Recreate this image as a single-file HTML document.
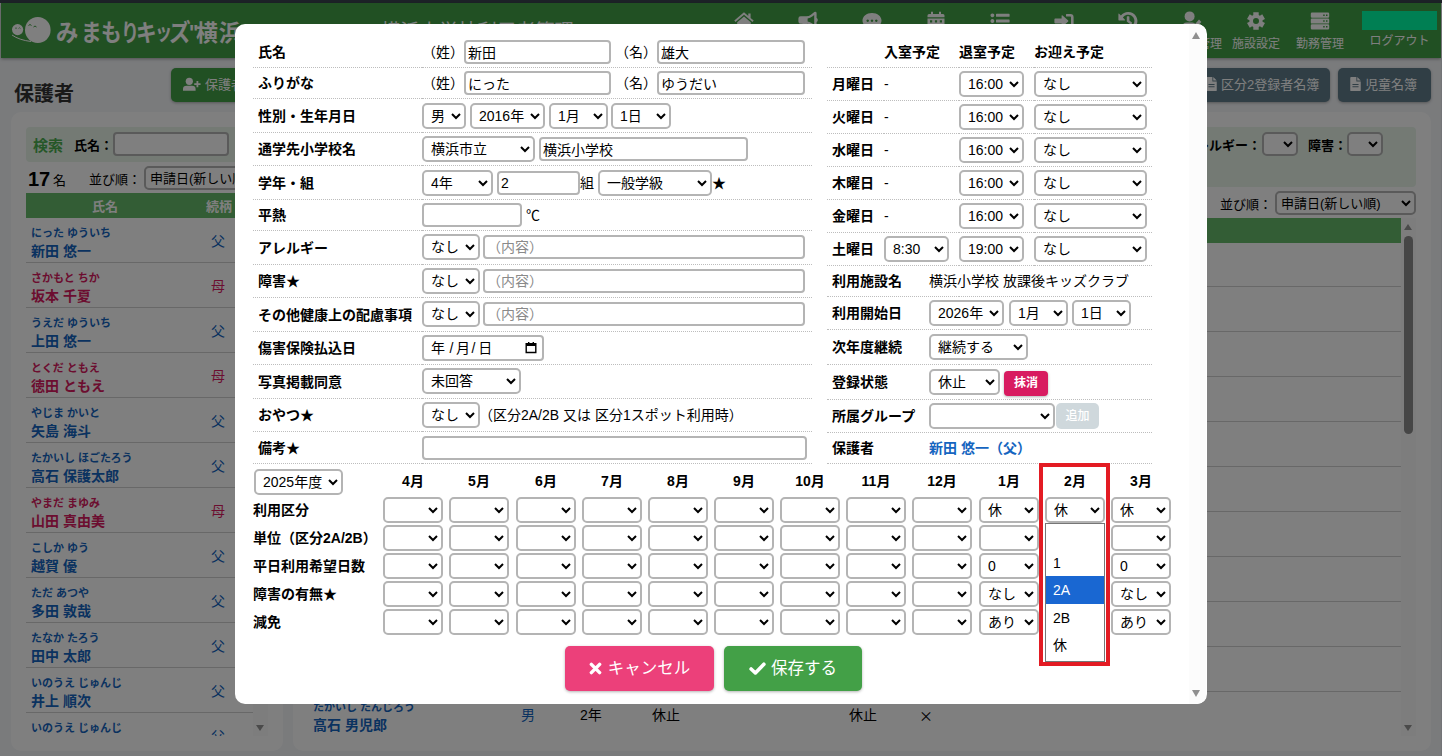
<!DOCTYPE html><html lang="ja"><head><meta charset="utf-8"><title>保護者</title><style>
*{box-sizing:border-box}
html,body{margin:0;padding:0}
body{width:1442px;height:756px;overflow:hidden;position:relative;background:#f4f6f9;font-family:"Liberation Sans", "Noto Sans CJK JP", sans-serif;font-size:14px;color:#000;line-height:20px}
input,select,button{font-family:"Liberation Sans", "Noto Sans CJK JP", sans-serif;font-size:14px;color:#000}
.abs{position:absolute}
#topbar{left:0;top:0;width:1442px;height:3px;background:#3a444f}
#hdr{left:1px;top:3px;width:1440px;height:55px;background:#43a047;box-shadow:0 1px 3px rgba(0,0,0,.35)}
#logo{left:10px;top:10px;width:44px;height:36px}
#brand{left:55px;top:12px;height:36px;width:200px;line-height:36px;font-size:24px;font-weight:700;color:#fff;white-space:nowrap}
#brand span{position:absolute;top:0;transform-origin:0 50%;display:block}
#title{left:380px;top:14px;font-size:19.3px;line-height:30px;color:#fff;white-space:nowrap}
.nav{top:0;width:64px;height:55px;text-align:center;color:#fff}
.nav svg{position:absolute;left:22px;top:8px;width:20px;height:20px;fill:#fff}
.nav span{position:absolute;left:-8px;width:80px;top:33px;font-size:12px;line-height:16px;white-space:nowrap}
#userbox{left:1361px;top:8px;width:75px;height:19px;background:#00ffa6}
#logout{left:1361px;top:30px;width:75px;text-align:center;font-size:12px;line-height:16px;color:#fff}
h1{position:absolute;left:14px;top:79px;margin:0;font-size:20px;line-height:30px;font-weight:700;color:#333}
.btn{position:absolute;height:34px;border-radius:5px;color:#fff;font-size:13px;line-height:34px;white-space:nowrap;box-shadow:0 1px 3px rgba(0,0,0,.3);padding:0 12px}
.btn svg{width:14px;height:14px;fill:#fff;vertical-align:-2px;margin-right:4px}
.card{position:absolute;background:#fff;border-radius:10px;overflow:hidden}
.sbox{position:absolute;background:#e8f5e9;border-radius:4px}
.s{border:2px solid #b4b4b4;border-radius:5px;background:#fff;height:26px;padding:0 0 0 3px;margin:0;font-size:14px;vertical-align:middle}
.up td+td>*{position:relative;top:-0.5px}
.s.ps{font-size:13px;height:24px;padding-left:0}
.i{border:2px solid #b4b4b4;border-radius:4px;background:#fff;height:24px;padding:0 2px;margin:0;font-size:14px;vertical-align:middle}
.i::placeholder{color:#8a8a8a}
.th{position:absolute;background:#66bb6a;color:#fff;font-weight:700;font-size:13px;line-height:27px;height:25px}
.row{position:absolute;height:45px;border-bottom:1px solid #d0d0d0}
.row .k{position:absolute;left:5px;top:7px;font-size:11px;line-height:16px;font-weight:700;white-space:nowrap}
.row .n{position:absolute;left:5px;top:23px;font-size:14px;line-height:20px;font-weight:700;white-space:nowrap}
.row .r{position:absolute;top:13px;font-size:14px;line-height:20px;white-space:nowrap}
.m{color:#1565c0}.f{color:#d81b60}
#ov{left:0;top:0;width:1442px;height:756px;background:rgba(0,0,0,.5)}
#modal{left:235px;top:24px;width:972px;height:680px;background:#fff;border-radius:10px;overflow:hidden}
table{border-collapse:separate;border-spacing:0}
.ft{position:absolute}
.ft td{padding:0;border-bottom:1px dotted #bdbdbd;vertical-align:middle;white-space:nowrap;font-size:14px}
.ft td.l{font-weight:700;padding-left:5px}
.ft td b{font-weight:700}
.ft td span{vertical-align:middle}
.g{position:absolute;font-weight:700;font-size:14px;line-height:20px;white-space:nowrap}
.gs{position:absolute;width:60px;height:26px}
.sb{position:absolute;background:#fcfcfc}
.tri{position:absolute;width:0;height:0;border-left:5px solid transparent;border-right:5px solid transparent}
</style></head><body>
<div id="topbar" class="abs"></div>
<header id="hdr" class="abs">
<svg id="logo" class="abs" viewBox="0 0 44 36"><ellipse cx="26.8" cy="17" rx="12.8" ry="13" fill="#fff"/><circle cx="6.6" cy="16.6" r="5.6" fill="#fff"/><path d="M1 22 Q8 27 20 28.5" stroke="#fff" stroke-width="1" fill="none"/><path d="M17.5 12.5 q1.5 -2 3 0 M22.5 14 q1.5 -2 3 0" stroke="#43a047" stroke-width="1" fill="none"/><path d="M4 15.5 q1 -1.5 2 0 M7.5 15.5 q1 -1.5 2 0" stroke="#43a047" stroke-width=".7" fill="none"/></svg>
<div id="brand" class="abs"><span style="left:0px;font-size:24px;transform:scaleX(0.93)">み</span><span style="left:24.5px;font-size:24px;transform:scaleX(0.86)">ま</span><span style="left:44.5px;font-size:24px;transform:scaleX(0.86)">も</span><span style="left:65px;font-size:24px;transform:scaleX(0.75)">り</span><span style="left:80px;font-size:24px;transform:scaleX(0.86)">キ</span><span style="left:99px;font-size:22px;transform:scaleX(0.78)">ッ</span><span style="left:113px;font-size:24px;transform:scaleX(0.9)">ズ</span><span style="left:132.5px;font-size:22px;transform:scaleX(0.9)">"</span><span style="left:140px;font-size:23px;transform:scaleX(0.95)">横</span><span style="left:163px;font-size:23px;transform:scaleX(0.95)">浜</span></div>
<div id="title" class="abs">横浜小学校利用者管理</div>
<div class="nav abs" style="left:711px"><svg viewBox="0 0 20 20" ><path d="M10 1.2 L0.3 9.6 L1.5 11 L10 3.7 L18.5 11 L19.7 9.6 L16.6 6.9 V2.6 H14.3 V4.9 Z M10 5.4 L3.2 11.3 V17.6 Q3.2 18.3 3.9 18.3 H8 V13.4 H12 V18.3 H16.1 Q16.8 18.3 16.8 17.6 V11.3 Z"/></svg><span>ホーム</span></div>
<div class="nav abs" style="left:775px"><svg viewBox="0 0 20 20" ><path fill-rule="evenodd" d="M17.2 0.8 Q18.6 0.8 18.6 2.2 V7 Q19.8 7.6 19.8 9 Q19.8 10.4 18.6 11 V15.8 Q18.6 17.2 17.2 17.2 Q16.7 17.2 16.3 16.9 L12.9 14.2 Q11.2 12.9 9 12.7 L9.9 17.6 Q10.1 18.8 8.9 18.8 H6.6 Q5.8 18.8 5.6 18 L4.4 12.7 H2.6 Q0.4 12.7 0.4 10.5 V7.5 Q0.4 5.3 2.6 5.3 H8.2 Q11 5.3 12.9 3.8 L16.3 1.1 Q16.7 0.8 17.2 0.8 Z M16.2 4 L14.3 5.5 Q12.2 7.2 9.6 7.6 V10.4 Q12.2 10.8 14.3 12.5 L16.2 14 Z"/></svg><span>お知らせ</span></div>
<div class="nav abs" style="left:839px"><svg viewBox="0 0 20 20" ><path fill-rule="evenodd" d="M10 2 C4.5 2 0.5 5.4 0.5 9.6 C0.5 11.5 1.3 13.2 2.7 14.5 C2.3 16 1.2 17.3 0.6 18 C3 18 4.9 17 5.9 16.3 C7.1 16.8 8.5 17 10 17 C15.5 17 19.5 13.7 19.5 9.6 C19.5 5.4 15.5 2 10 2 Z M5.7 8.4 a1.25 1.25 0 1 0 0.01 0 Z M10 8.4 a1.25 1.25 0 1 0 0.01 0 Z M14.3 8.4 a1.25 1.25 0 1 0 0.01 0 Z"/></svg><span>連絡</span></div>
<div class="nav abs" style="left:903px"><svg viewBox="0 0 20 20" ><path fill-rule="evenodd" d="M1.5 7.4 H18.5 V17 Q18.5 18.5 17 18.5 H3 Q1.5 18.5 1.5 17 Z M5 0.8 H7 V3 H13 V0.8 H15 V3 H17 Q18.5 3 18.5 4.5 V6.2 H1.5 V4.5 Q1.5 3 3 3 H5 Z M4 9.3 h2.2 v2.2 h-2.2 Z M8.9 9.3 h2.2 v2.2 h-2.2 Z M13.8 9.3 h2.2 v2.2 h-2.2 Z M4 13.6 h2.2 v2.2 h-2.2 Z M8.9 13.6 h2.2 v2.2 h-2.2 Z M13.8 13.6 h2.2 v2.2 h-2.2 Z"/></svg><span>予定</span></div>
<div class="nav abs" style="left:967px"><svg viewBox="0 0 20 20" ><path d="M2.4 2.4 a1.9 1.9 0 1 0 0.01 0 Z M6.6 2.8 H19 Q19.6 2.8 19.6 3.4 V5.2 Q19.6 5.8 19 5.8 H6.6 Q6 5.8 6 5.2 V3.4 Q6 2.8 6.6 2.8 Z M2.4 8.1 a1.9 1.9 0 1 0 0.01 0 Z M6.6 8.5 H19 Q19.6 8.5 19.6 9.1 V10.9 Q19.6 11.5 19 11.5 H6.6 Q6 11.5 6 10.9 V9.1 Q6 8.5 6.6 8.5 Z M2.4 13.8 a1.9 1.9 0 1 0 0.01 0 Z M6.6 14.2 H19 Q19.6 14.2 19.6 14.8 V16.6 Q19.6 17.2 19 17.2 H6.6 Q6 17.2 6 16.6 V14.8 Q6 14.2 6.6 14.2 Z"/></svg><span>名簿</span></div>
<div class="nav abs" style="left:1031px"><svg viewBox="0 0 20 20" ><path d="M12.6 3 H16.4 Q19.6 3 19.6 6.2 V13.8 Q19.6 17 16.4 17 H12.6 Q12 17 12 16.4 V15 Q12 14.4 12.6 14.4 H16.4 Q17 14.4 17 13.8 V6.2 Q17 5.6 16.4 5.6 H12.6 Q12 5.6 12 5 V3.6 Q12 3 12.6 3 Z M8.6 4.6 L14.2 9.6 Q14.6 10 14.2 10.4 L8.6 15.4 Q7.6 16.2 7.6 14.9 V12.4 H1.2 Q0.4 12.4 0.4 11.6 V8.4 Q0.4 7.6 1.2 7.6 H7.6 V5.1 Q7.6 3.8 8.6 4.6 Z"/></svg><span>入退室</span></div>
<div class="nav abs" style="left:1095px"><svg viewBox="0 0 20 20" ><path d="M10.4 1 A9 9 0 1 1 4.3 16.6 L6.2 14.6 A6.2 6.2 0 1 0 4.9 6.6 L7 8.7 Q7.5 9.4 6.6 9.4 H1 Q0.4 9.4 0.4 8.8 V3.2 Q0.4 2.3 1.1 2.8 L2.9 4.6 A9 9 0 0 1 10.4 1 Z M9.4 5.2 H10.8 Q11.4 5.2 11.4 5.8 V9.5 L13.9 11.4 Q14.4 11.8 14 12.3 L13.3 13.2 Q12.9 13.7 12.4 13.3 L9 10.7 Q8.8 10.5 8.8 10.2 V5.8 Q8.8 5.2 9.4 5.2 Z"/></svg><span>履歴</span></div>
<div class="nav abs" style="left:1159px"><svg viewBox="0 0 20 20" ><circle cx="7.6" cy="5.4" r="5"/><path d="M0.2 18.6 V16.8 Q0.2 11.6 5 11.6 H10.2 Q12.6 11.6 13.6 13.2 L12 15 V18.6 Z"/><path d="M17 8.6 L19.4 11 L14.6 15.8 L12.2 16.2 L12.6 13.4 Z"/></svg><span>利用者管理</span></div>
<div class="nav abs" style="left:1223px"><svg viewBox="0 0 20 20" ><path fill-rule="evenodd" stroke-linejoin="round" d="M7.31 3.97 L7.28 1.21 L12.72 1.21 L12.69 3.97 L13.87 4.66 L16.25 3.25 L18.97 7.96 L16.56 9.32 L16.56 10.68 L18.97 12.04 L16.25 16.75 L13.87 15.34 L12.69 16.03 L12.72 18.79 L7.28 18.79 L7.31 16.03 L6.13 15.34 L3.75 16.75 L1.03 12.04 L3.44 10.68 L3.44 9.32 L1.03 7.96 L3.75 3.25 L6.13 4.66 Z M10.00 7.00 A3.00 3.00 0 1 0 10.00 13.00 A3.00 3.00 0 1 0 10.00 7.00 Z"/></svg><span>施設設定</span></div>
<div class="nav abs" style="left:1287px"><svg viewBox="0 0 20 20" ><path fill-rule="evenodd" d="M2 1.5 H18 Q19.2 1.5 19.2 2.7 V5.6 Q19.2 6.8 18 6.8 H2 Q0.8 6.8 0.8 5.6 V2.7 Q0.8 1.5 2 1.5 Z M2 7.4 H18 Q19.2 7.4 19.2 8.6 V11.4 Q19.2 12.6 18 12.6 H2 Q0.8 12.6 0.8 11.4 V8.6 Q0.8 7.4 2 7.4 Z M2 13.2 H18 Q19.2 13.2 19.2 14.4 V17.3 Q19.2 18.5 18 18.5 H2 Q0.8 18.5 0.8 17.3 V14.4 Q0.8 13.2 2 13.2 Z M13.2 3.4 h1.5 v1.5 h-1.5 Z M16 3.4 h1.5 v1.5 h-1.5 Z M13.2 9.25 h1.5 v1.5 h-1.5 Z M16 9.25 h1.5 v1.5 h-1.5 Z M13.2 15.1 h1.5 v1.5 h-1.5 Z M16 15.1 h1.5 v1.5 h-1.5 Z"/></svg><span>勤務管理</span></div>
<div id="userbox" class="abs"></div><div id="logout" class="abs">ログアウト</div>
</header>
<h1>保護者</h1>
<div class="btn" style="left:171px;top:68px;width:130px;background:#43a047"><svg viewBox="0 0 20 16" style="width:18px;height:15px;vertical-align:-3px"><circle cx="7" cy="4.5" r="4"/><path d="M0 15 V13 Q0 9.5 4 9.5 H10 Q14 9.5 14 13 V15 Z M15 4 H17 V6.5 H19.5 V8.5 H17 V11 H15 V8.5 H12.5 V6.5 H15 Z"/></svg>保護者登録</div>
<div class="btn" style="left:1195px;top:68px;width:135px;background:#607d8b;padding-left:11px"><svg viewBox="0 0 12 16" style="width:11px"><path fill-rule="evenodd" d="M0 1 Q0 0 1 0 H7 V5 H12 V15 Q12 16 11 16 H1 Q0 16 0 15 Z M8 0 L12 4 H8 Z M2.5 8 H9.5 V9.2 H2.5 Z M2.5 10.5 H9.5 V11.7 H2.5 Z"/></svg>区分2登録者名簿</div>
<div class="btn" style="left:1338px;top:68px;width:93px;background:#607d8b"><svg viewBox="0 0 12 16" style="width:11px"><path fill-rule="evenodd" d="M0 1 Q0 0 1 0 H7 V5 H12 V15 Q12 16 11 16 H1 Q0 16 0 15 Z M8 0 L12 4 H8 Z M2.5 8 H9.5 V9.2 H2.5 Z M2.5 10.5 H9.5 V11.7 H2.5 Z"/></svg>児童名簿</div>
<section class="card" style="left:11px;top:112px;width:272px;height:639px">
<div class="sbox" style="left:15px;top:15px;width:242px;height:35px"></div>
<div class="abs" style="left:22px;top:24px;font-size:15px;font-weight:700;color:#4caf50;white-space:nowrap">検索</div>
<div class="abs" style="left:63px;top:24px;font-size:13px;font-weight:700;white-space:nowrap">氏名：</div>
<input class="i abs" style="left:102px;top:20px;width:116px" aria-label="氏名">
<div class="abs" style="left:17px;top:55px;font-size:20px;line-height:24px;font-weight:700">17</div>
<div class="abs" style="left:42px;top:57px;font-size:13px;line-height:24px;white-space:nowrap">名</div>
<div class="abs" style="left:78px;top:56px;font-size:13px;line-height:24px;white-space:nowrap">並び順：</div>
<select class="s ps abs" style="left:133px;top:54px;width:150px"><option>申請日(新しい順)</option></select>
<div class="th" style="left:15px;top:81px;width:227px"><span class="abs" style="left:66px">氏名</span><span class="abs" style="left:180px">続柄</span></div>
<div class="abs" style="left:15px;top:106px;width:227px;height:518px;overflow:hidden">
<div class="row m" style="left:0;top:0px;width:227px"><span class="k">にった ゆういち</span><span class="n">新田 悠一</span><span class="r" style="left:185px">父</span></div>
<div class="row f" style="left:0;top:45px;width:227px"><span class="k">さかもと ちか</span><span class="n">坂本 千夏</span><span class="r" style="left:185px">母</span></div>
<div class="row m" style="left:0;top:90px;width:227px"><span class="k">うえだ ゆういち</span><span class="n">上田 悠一</span><span class="r" style="left:185px">父</span></div>
<div class="row f" style="left:0;top:135px;width:227px"><span class="k">とくだ ともえ</span><span class="n">徳田 ともえ</span><span class="r" style="left:185px">母</span></div>
<div class="row m" style="left:0;top:180px;width:227px"><span class="k">やじま かいと</span><span class="n">矢島 海斗</span><span class="r" style="left:185px">父</span></div>
<div class="row m" style="left:0;top:225px;width:227px"><span class="k">たかいし ほごたろう</span><span class="n">高石 保護太郎</span><span class="r" style="left:185px">父</span></div>
<div class="row f" style="left:0;top:270px;width:227px"><span class="k">やまだ まゆみ</span><span class="n">山田 真由美</span><span class="r" style="left:185px">母</span></div>
<div class="row m" style="left:0;top:315px;width:227px"><span class="k">こしか ゆう</span><span class="n">越賀 優</span><span class="r" style="left:185px">父</span></div>
<div class="row m" style="left:0;top:360px;width:227px"><span class="k">ただ あつや</span><span class="n">多田 敦哉</span><span class="r" style="left:185px">父</span></div>
<div class="row m" style="left:0;top:405px;width:227px"><span class="k">たなか たろう</span><span class="n">田中 太郎</span><span class="r" style="left:185px">父</span></div>
<div class="row m" style="left:0;top:450px;width:227px"><span class="k">いのうえ じゅんじ</span><span class="n">井上 順次</span><span class="r" style="left:185px">父</span></div>
<div class="row m" style="left:0;top:495px;width:227px"><span class="k">いのうえ じゅんじ</span><span class="n">井上 順次</span><span class="r" style="left:185px">父</span></div>
</div>
<div class="abs" style="left:242px;top:81px;width:15px;height:543px;background:#fbfbfb"></div>
<div class="tri" style="left:245px;top:613px;border-top:6px solid #949494;border-left-width:4.5px;border-right-width:4.5px"></div>
</section>
<section class="card" style="left:293px;top:112px;width:1138px;height:639px">
<div class="sbox" style="left:15px;top:15px;width:1108px;height:60px"></div>
<div class="abs" style="left:22px;top:24px;font-size:15px;font-weight:700;color:#4caf50;white-space:nowrap">検索</div>
<div class="abs" style="left:890px;top:24px;font-size:13px;font-weight:700;white-space:nowrap">アレルギー：</div>
<select class="s ps abs" style="left:969px;top:20px;width:36px"><option></option></select>
<div class="abs" style="left:1015px;top:24px;font-size:13px;font-weight:700;white-space:nowrap">障害：</div>
<select class="s ps abs" style="left:1054px;top:20px;width:36px"><option></option></select>
<div class="abs" style="left:927px;top:81px;font-size:13px;line-height:24px;white-space:nowrap">並び順：</div>
<select class="s ps abs" style="left:982px;top:79px;width:141px"><option>申請日(新しい順)</option></select>
<div class="th" style="left:15px;top:106px;width:1093px"></div>
<div class="abs" style="left:15px;top:130px;width:1093px;height:494px;overflow:hidden">
<div class="row" style="left:0;top:0px;width:1093px"></div>
<div class="row" style="left:0;top:45px;width:1093px"></div>
<div class="row" style="left:0;top:90px;width:1093px"></div>
<div class="row" style="left:0;top:135px;width:1093px"></div>
<div class="row" style="left:0;top:180px;width:1093px"></div>
<div class="row" style="left:0;top:225px;width:1093px"></div>
<div class="row" style="left:0;top:270px;width:1093px"></div>
<div class="row" style="left:0;top:315px;width:1093px"></div>
<div class="row" style="left:0;top:360px;width:1093px"></div>
<div class="row" style="left:0;top:405px;width:1093px"></div>
<div class="row m" style="left:0;top:450px;width:1093px"><span class="k">たかいし たんじろう</span><span class="n">高石 男児郎</span><span class="r" style="left:213px">男</span><span class="r" style="left:272px;color:#000">2年</span><span class="r" style="left:344px;color:#000">休止</span><span class="r" style="left:541px;color:#000">休止</span><span class="r" style="left:611px;color:#000;font-size:14px;font-family:&quot;Noto Sans CJK JP&quot;,sans-serif">×</span></div>
</div>
<div class="abs" style="left:1108px;top:106px;width:15px;height:518px;background:#fbfbfb"></div>
<div class="tri" style="left:1111px;top:112px;border-bottom:6px solid #949494;border-left-width:4.5px;border-right-width:4.5px"></div>
<div class="abs" style="left:1111px;top:124px;width:9px;height:198px;border-radius:5px;background:#8c8c8c"></div>
<div class="tri" style="left:1111px;top:613px;border-top:6px solid #949494;border-left-width:4.5px;border-right-width:4.5px"></div>
</section>
<div class="abs" style="left:1441px;top:3px;width:1px;height:753px;background:#e6e9ee"></div>
<div id="ov" class="abs"></div>
<div id="modal" class="abs" role="dialog">
<table class="ft" style="left:18px;top:12px;width:559px">
<tr class="h32" style="height:32px"><td class="l" style="width:169px">氏名</td><td><span style="display:inline-block;width:42px">（姓）</span><input class="i" style="width:147px;" value="新田" placeholder=""><span style="display:inline-block;width:46px;text-align:right;padding-right:0">（名）</span><input class="i" style="width:148px;" value="雄大" placeholder=""></td></tr>
<tr class="h31" style="height:31px"><td class="l" style="width:169px">ふりがな</td><td><span style="display:inline-block;width:42px">（姓）</span><input class="i" style="width:147px;" value="にった" placeholder=""><span style="display:inline-block;width:46px;text-align:right">（名）</span><input class="i" style="width:148px;" value="ゆうだい" placeholder=""></td></tr>
<tr class="h34" style="height:34px"><td class="l" style="width:169px">性別・生年月日</td><td><select class="s" style="width:44px;"><option>男</option></select><select class="s" style="width:75px;margin-left:4px"><option>2016年</option></select><select class="s" style="width:59px;margin-left:4px"><option>1月</option></select><select class="s" style="width:60px;margin-left:3px"><option>1日</option></select></td></tr>
<tr class="h33" style="height:33px"><td class="l" style="width:169px">通学先小学校名</td><td><select class="s" style="width:113px;"><option>横浜市立</option></select><input class="i" style="width:209px;margin-left:4px" value="横浜小学校" placeholder=""></td></tr>
<tr class="h34" style="height:34px"><td class="l" style="width:169px">学年・組</td><td><select class="s" style="width:71px;"><option>4年</option></select><input class="i" style="width:83px;margin-left:4px" value="2" placeholder=""><span>組</span><select class="s" style="width:114px;margin-left:4px"><option>一般学級</option></select><span>★</span></td></tr>
<tr class="h31" style="height:31px"><td class="l" style="width:169px">平熱</td><td><input class="i" style="width:100px;" value="" placeholder=""><span style="margin-left:4px">℃</span></td></tr>
<tr class="h34 up" style="height:34px"><td class="l" style="width:169px">アレルギー</td><td><select class="s" style="width:58px;"><option>なし</option></select><input class="i" style="width:322px;margin-left:3px" value="" placeholder="（内容）"></td></tr>
<tr class="h33" style="height:33px"><td class="l" style="width:169px">障害★</td><td><select class="s" style="width:58px;"><option>なし</option></select><input class="i" style="width:322px;margin-left:3px" value="" placeholder="（内容）"></td></tr>
<tr class="h34 up" style="height:34px"><td class="l" style="width:169px">その他健康上の配慮事項</td><td><select class="s" style="width:58px;"><option>なし</option></select><input class="i" style="width:322px;margin-left:3px" value="" placeholder="（内容）"></td></tr>
<tr class="h33" style="height:33px"><td class="l" style="width:169px">傷害保険払込日</td><td><span class="i" style="display:inline-block;width:122px;height:26px;position:relative;line-height:22px;padding-left:7px">年<span style="margin:0 2.4px 0 4.6px;vertical-align:baseline">/</span>月<span style="margin:0 3px 0 1.5px;vertical-align:baseline">/</span>日<svg viewBox="0 0 12 12" style="position:absolute;right:5px;top:4px;width:12px;height:13px"><path d="M1.2 2.2 H10.8 V11 H1.2 Z" fill="none" stroke="#000" stroke-width="1.4"/><path d="M1.2 2 H10.8 V4.6 H1.2 Z M3 0.5 H4.4 V2 H3 Z M7.6 0.5 H9 V2 H7.6 Z" fill="#000"/></svg></span></td></tr>
<tr class="h34 up" style="height:34px"><td class="l" style="width:169px">写真掲載同意</td><td><select class="s" style="width:99px;"><option>未回答</option></select></td></tr>
<tr class="h33" style="height:33px"><td class="l" style="width:169px">おやつ★</td><td><select class="s" style="width:58px;"><option>なし</option></select><span style="margin-left:-1px">（区分2A/2B 又は 区分1スポット利用時）</span></td></tr>
<tr class="h32" style="height:32px"><td class="l" style="width:169px">備考★</td><td><input class="i" style="width:385px;" value="" placeholder=""></td></tr>
</table>
<table class="ft" style="left:592px;top:12px;width:325px">
<tr style="height:32px"><td class="l" style="width:57px"></td><td style="width:75px"><b>入室予定</b></td><td style="width:75px"><b>退室予定</b></td><td><b>お迎え予定</b></td></tr>
<tr style="height:33px"><td class="l">月曜日</td><td>-</td><td><select class="s" style="width:65px;"><option>16:00</option></select></td><td><select class="s" style="width:113px;"><option>なし</option></select></td></tr>
<tr style="height:33px"><td class="l">火曜日</td><td>-</td><td><select class="s" style="width:65px;"><option>16:00</option></select></td><td><select class="s" style="width:113px;"><option>なし</option></select></td></tr>
<tr style="height:33px"><td class="l">水曜日</td><td>-</td><td><select class="s" style="width:65px;"><option>16:00</option></select></td><td><select class="s" style="width:113px;"><option>なし</option></select></td></tr>
<tr style="height:33px"><td class="l">木曜日</td><td>-</td><td><select class="s" style="width:65px;"><option>16:00</option></select></td><td><select class="s" style="width:113px;"><option>なし</option></select></td></tr>
<tr style="height:33px"><td class="l">金曜日</td><td>-</td><td><select class="s" style="width:65px;"><option>16:00</option></select></td><td><select class="s" style="width:113px;"><option>なし</option></select></td></tr>
<tr style="height:33px"><td class="l">土曜日</td><td><select class="s" style="width:65px;"><option>8:30</option></select></td><td><select class="s" style="width:65px;"><option>19:00</option></select></td><td><select class="s" style="width:113px;"><option>なし</option></select></td></tr>
<tr style="height:31px"><td class="l" colspan="2" style="padding-left:5px">利用施設名<span style="display:none"></span></td><td colspan="2" style="position:relative"><div style="margin-left:-30px">横浜小学校 放課後キッズクラブ</div></td></tr>
<tr style="height:33px"><td class="l" colspan="2" style="padding-left:5px">利用開始日<span style="display:none"></span></td><td colspan="2" style="position:relative"><div style="margin-left:-30px"><select class="s" style="width:75px;"><option>2026年</option></select><select class="s" style="width:59px;margin-left:5px"><option>1月</option></select><select class="s" style="width:59px;margin-left:4px"><option>1日</option></select></div></td></tr>
<tr style="height:35px"><td class="l" colspan="2" style="padding-left:5px">次年度継続<span style="display:none"></span></td><td colspan="2" style="position:relative"><div style="margin-left:-30px"><select class="s" style="width:99px;"><option>継続する</option></select></div></td></tr>
<tr style="height:35px"><td class="l" colspan="2" style="padding-left:5px">登録状態<span style="display:none"></span></td><td colspan="2" style="position:relative"><div style="margin-left:-30px"><select class="s" style="width:71px;"><option>休止</option></select><span style="display:inline-block;vertical-align:middle;margin-left:4px;width:44px;height:25px;border-radius:4px;background:#d81b60;color:#fff;font-weight:700;font-size:12px;line-height:25px;text-align:center;box-shadow:0 1px 3px rgba(0,0,0,.3);position:relative;top:1px">抹消</span></div></td></tr>
<tr style="height:33px"><td class="l" colspan="2" style="padding-left:5px">所属グループ<span style="display:none"></span></td><td colspan="2" style="position:relative"><div style="margin-left:-30px"><select class="s" style="width:126px;"><option></option></select><span style="display:inline-block;vertical-align:middle;margin-left:1px;width:43px;height:26px;border-radius:5px;background:#cfd8dc;color:#fff;font-size:12px;font-weight:500;line-height:26px;text-align:center">追加</span></div></td></tr>
<tr style="height:31px"><td class="l" colspan="2" style="padding-left:5px">保護者<span style="display:none"></span></td><td colspan="2" style="position:relative"><div style="margin-left:-30px"><a style="color:#1565c0;font-weight:700">新田 悠一（父）</a></div></td></tr>
</table>
<select class="s abs" style="left:19px;top:445px;width:89px;height:26px"><option>2025年度</option></select>
<div class="g" style="left:148px;top:447px;width:60px;text-align:center">4月</div>
<div class="g" style="left:214px;top:447px;width:60px;text-align:center">5月</div>
<div class="g" style="left:281px;top:447px;width:60px;text-align:center">6月</div>
<div class="g" style="left:347px;top:447px;width:60px;text-align:center">7月</div>
<div class="g" style="left:413px;top:447px;width:60px;text-align:center">8月</div>
<div class="g" style="left:479px;top:447px;width:60px;text-align:center">9月</div>
<div class="g" style="left:545px;top:447px;width:60px;text-align:center">10月</div>
<div class="g" style="left:611px;top:447px;width:60px;text-align:center">11月</div>
<div class="g" style="left:677px;top:447px;width:60px;text-align:center">12月</div>
<div class="g" style="left:744px;top:447px;width:60px;text-align:center">1月</div>
<div class="g" style="left:810px;top:447px;width:60px;text-align:center">2月</div>
<div class="g" style="left:876px;top:447px;width:60px;text-align:center">3月</div>
<div class="g" style="left:18px;top:476px">利用区分</div>
<select class="s gs" style="left:148px;top:473px"><option></option></select>
<select class="s gs" style="left:214px;top:473px"><option></option></select>
<select class="s gs" style="left:281px;top:473px"><option></option></select>
<select class="s gs" style="left:347px;top:473px"><option></option></select>
<select class="s gs" style="left:413px;top:473px"><option></option></select>
<select class="s gs" style="left:479px;top:473px"><option></option></select>
<select class="s gs" style="left:545px;top:473px"><option></option></select>
<select class="s gs" style="left:611px;top:473px"><option></option></select>
<select class="s gs" style="left:677px;top:473px"><option></option></select>
<select class="s gs" style="left:744px;top:473px"><option>休</option></select>
<select class="s gs" style="left:810px;top:473px"><option>休</option></select>
<select class="s gs" style="left:876px;top:473px"><option>休</option></select>
<div class="g" style="left:18px;top:504px">単位（区分2A/2B）</div>
<select class="s gs" style="left:148px;top:501px"><option></option></select>
<select class="s gs" style="left:214px;top:501px"><option></option></select>
<select class="s gs" style="left:281px;top:501px"><option></option></select>
<select class="s gs" style="left:347px;top:501px"><option></option></select>
<select class="s gs" style="left:413px;top:501px"><option></option></select>
<select class="s gs" style="left:479px;top:501px"><option></option></select>
<select class="s gs" style="left:545px;top:501px"><option></option></select>
<select class="s gs" style="left:611px;top:501px"><option></option></select>
<select class="s gs" style="left:677px;top:501px"><option></option></select>
<select class="s gs" style="left:744px;top:501px"><option></option></select>
<select class="s gs" style="left:876px;top:501px"><option></option></select>
<div class="g" style="left:18px;top:532px">平日利用希望日数</div>
<select class="s gs" style="left:148px;top:529px"><option></option></select>
<select class="s gs" style="left:214px;top:529px"><option></option></select>
<select class="s gs" style="left:281px;top:529px"><option></option></select>
<select class="s gs" style="left:347px;top:529px"><option></option></select>
<select class="s gs" style="left:413px;top:529px"><option></option></select>
<select class="s gs" style="left:479px;top:529px"><option></option></select>
<select class="s gs" style="left:545px;top:529px"><option></option></select>
<select class="s gs" style="left:611px;top:529px"><option></option></select>
<select class="s gs" style="left:677px;top:529px"><option></option></select>
<select class="s gs" style="left:744px;top:529px"><option>0</option></select>
<select class="s gs" style="left:876px;top:529px"><option>0</option></select>
<div class="g" style="left:18px;top:560px">障害の有無★</div>
<select class="s gs" style="left:148px;top:557px"><option></option></select>
<select class="s gs" style="left:214px;top:557px"><option></option></select>
<select class="s gs" style="left:281px;top:557px"><option></option></select>
<select class="s gs" style="left:347px;top:557px"><option></option></select>
<select class="s gs" style="left:413px;top:557px"><option></option></select>
<select class="s gs" style="left:479px;top:557px"><option></option></select>
<select class="s gs" style="left:545px;top:557px"><option></option></select>
<select class="s gs" style="left:611px;top:557px"><option></option></select>
<select class="s gs" style="left:677px;top:557px"><option></option></select>
<select class="s gs" style="left:744px;top:557px"><option>なし</option></select>
<select class="s gs" style="left:876px;top:557px"><option>なし</option></select>
<div class="g" style="left:18px;top:588px">減免</div>
<select class="s gs" style="left:148px;top:585px"><option></option></select>
<select class="s gs" style="left:214px;top:585px"><option></option></select>
<select class="s gs" style="left:281px;top:585px"><option></option></select>
<select class="s gs" style="left:347px;top:585px"><option></option></select>
<select class="s gs" style="left:413px;top:585px"><option></option></select>
<select class="s gs" style="left:479px;top:585px"><option></option></select>
<select class="s gs" style="left:545px;top:585px"><option></option></select>
<select class="s gs" style="left:611px;top:585px"><option></option></select>
<select class="s gs" style="left:677px;top:585px"><option></option></select>
<select class="s gs" style="left:744px;top:585px"><option>あり</option></select>
<select class="s gs" style="left:876px;top:585px"><option>あり</option></select>
<div class="abs" style="left:804px;top:439px;width:71px;height:203px;border:4px solid #e31b23"></div>
<div class="abs" style="left:810px;top:499px;width:60px;height:139px;border:1px solid #767676;background:#fff;font-size:14px">
<div style="height:24.7px;line-height:26.7px;padding-left:7px;">&nbsp;</div>
<div style="height:27.5px;line-height:29.5px;padding-left:7px;">1</div>
<div style="height:27.5px;line-height:29.5px;padding-left:7px;background:#1967d2;color:#fff;">2A</div>
<div style="height:27.5px;line-height:29.5px;padding-left:7px;">2B</div>
<div style="height:27.5px;line-height:29.5px;padding-left:7px;">休</div>
</div>
<div class="abs" style="left:330px;top:622px;width:149px;height:45px;border-radius:5px;background:#ec407a;color:#fff;font-size:16.5px;line-height:44px;text-align:center;box-shadow:0 1px 3px rgba(0,0,0,.3);white-space:nowrap"><svg viewBox="0 0 12 12" style="width:13px;height:13px;margin-right:6px;vertical-align:-1px"><path d="M2.2 2.2 L9.8 9.8 M9.8 2.2 L2.2 9.8" stroke="#fff" stroke-width="3.2" stroke-linecap="round"/></svg>キャンセル</div>
<div class="abs" style="left:489px;top:622px;width:138px;height:45px;border-radius:5px;background:#43a047;color:#fff;font-size:16.5px;line-height:44px;text-align:center;box-shadow:0 1px 3px rgba(0,0,0,.3);white-space:nowrap"><svg viewBox="0 0 16 12" style="width:17px;height:13px;margin-right:5px;vertical-align:-1px"><path d="M2 6.5 L6 10.2 L14 2" stroke="#fff" stroke-width="3.4" fill="none" stroke-linecap="round" stroke-linejoin="round"/></svg>保存する</div>
<div class="sb" style="left:954px;top:0;width:17px;height:680px"></div>
<div class="tri" style="left:957px;top:8px;border-bottom:7px solid #909090;border-left-width:4.5px;border-right-width:4.5px"></div>
<div class="tri" style="left:957px;top:666px;border-top:7px solid #909090;border-left-width:4.5px;border-right-width:4.5px"></div>
</div>
</body></html>
